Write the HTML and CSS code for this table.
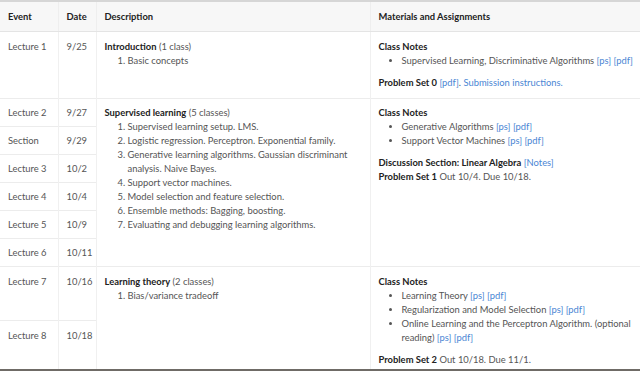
FILE: index.html
```html
<!DOCTYPE html>
<html>
<head>
<meta charset="utf-8">
<link rel="stylesheet" href="styles.css">
</head>
<body>
<table class="sched">
  <colgroup>
    <col class="c-event"><col class="c-date"><col class="c-desc"><col class="c-mat">
  </colgroup>
  <thead>
    <tr><th>Event</th><th>Date</th><th>Description</th><th>Materials and Assignments</th></tr>
  </thead>
  <tbody>
    <tr>
      <td>Lecture 1</td><td>9/25</td>
      <td><b>Introduction</b> (1 class)
        <ol><li>Basic concepts</li></ol>
      </td>
      <td class="mat"><b>Class Notes</b>
        <ul><li>Supervised Learning, Discriminative Algorithms <a>[ps]</a> <a>[pdf]</a></li></ul>
        <b>Problem Set 0</b> <a>[pdf]</a>. <a>Submission instructions.</a>
      </td>
    </tr>
    <tr class="short">
      <td>Lecture 2</td><td>9/27</td>
      <td rowspan="6" class="block"><b>Supervised learning</b> (5 classes)
        <ol>
          <li>Supervised learning setup. LMS.</li>
          <li>Logistic regression. Perceptron. Exponential family.</li>
          <li>Generative learning algorithms. Gaussian discriminant analysis. Naive Bayes.</li>
          <li>Support vector machines.</li>
          <li>Model selection and feature selection.</li>
          <li>Ensemble methods: Bagging, boosting.</li>
          <li>Evaluating and debugging learning algorithms.</li>
        </ol>
      </td>
      <td rowspan="6" class="block mat"><b>Class Notes</b>
        <ul>
          <li>Generative Algorithms <a>[ps]</a> <a>[pdf]</a></li>
          <li>Support Vector Machines <a>[ps]</a> <a>[pdf]</a></li>
        </ul>
        <b>Discussion Section: Linear Algebra</b> <a>[Notes]</a><br>
        <b>Problem Set 1</b> Out 10/4. Due 10/18.
      </td>
    </tr>
    <tr class="short"><td>Section</td><td>9/29</td></tr>
    <tr class="short"><td>Lecture 3</td><td>10/2</td></tr>
    <tr class="short"><td>Lecture 4</td><td>10/4</td></tr>
    <tr class="short"><td>Lecture 5</td><td>10/9</td></tr>
    <tr class="short"><td>Lecture 6</td><td>10/11</td></tr>
    <tr class="tall">
      <td>Lecture 7</td><td>10/16</td>
      <td rowspan="2"><b>Learning theory</b> (2 classes)
        <ol><li>Bias/variance tradeoff</li></ol>
      </td>
      <td rowspan="2" class="mat"><b>Class Notes</b>
        <ul>
          <li>Learning Theory <a>[ps]</a> <a>[pdf]</a></li>
          <li>Regularization and Model Selection <a>[ps]</a> <a>[pdf]</a></li>
          <li>Online Learning and the Perceptron Algorithm. (optional reading) <a>[ps]</a> <a>[pdf]</a></li>
        </ul>
        <b>Problem Set 2</b> Out 10/18. Due 11/1.
      </td>
    </tr>
    <tr><td>Lecture 8</td><td>10/18</td></tr>
  </tbody>
</table>
<div class="edge"></div>
</body>
</html>
```
FILE: styles.css
```css
html, body {
  margin: 0;
  padding: 0;
  background: #fff;
}
body {
  font-family: Lato, "Open Sans", sans-serif;
  font-size: 9.4px;
  line-height: 14px;
  color: #555;
  overflow: hidden;
}
.sched {
  width: 640px;
  border-collapse: collapse;
  table-layout: fixed;
  border-top: 2px solid #d6d6d6;
}
.c-event { width: 58px; }
.c-date { width: 38px; }
.c-desc { width: 274px; }
.c-mat { width: 270px; }
.sched th {
  background: #f7f7f7;
  color: #222;
  font-weight: 700;
  text-align: left;
  padding: 8px 8px 7px;
  border-bottom: 1px solid #e4e4e4;
  border-left: 1px solid #eee;
  white-space: nowrap;
}
.sched td {
  vertical-align: top;
  padding: 8px;
  border-top: 1px solid #ececec;
  border-left: 1px solid #f0f0f0;
}
.sched td:nth-child(-n+2) { white-space: nowrap; }
.sched th:first-child, .sched td:first-child { border-left: none; }
.sched tr.short > td { padding-top: 7px; padding-bottom: 6px; }
.sched tr.short > td.block { padding-top: 7px; white-space: normal; }
.sched tr.tall { height: 54px; }
.sched tr.tall > td:nth-child(n+3) { white-space: normal; }
.sched td.mat { padding-right: 0; }
b { color: #222; font-weight: 700; }
a { color: #4a86d4; text-decoration: none; }
ol, ul {
  margin: 0 0 8px 0;
  padding-left: 23px;
}
ol:last-child { margin-bottom: 0; }
.edge {
  position: fixed;
  left: 0;
  right: 0;
  bottom: 0;
  height: 2px;
  background: #6f6b66;
}
```
